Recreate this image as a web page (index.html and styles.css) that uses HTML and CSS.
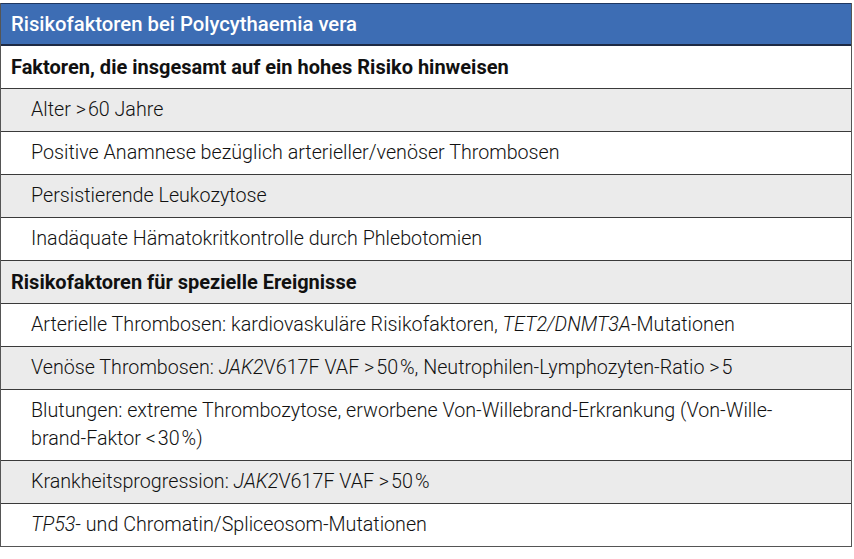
FILE: index.html
```html
<!DOCTYPE html>
<html lang="de">
<head>
<meta charset="utf-8">
<link rel="stylesheet" href="styles.css">
</head>
<body>
<div class="table">
  <div class="row head">Risikofaktoren bei Polycythaemia vera</div>
  <div class="row group">Faktoren, die insgesamt auf ein hohes Risiko hinweisen</div>
  <div class="row item alt">Alter &gt;&#8202;60 Jahre</div>
  <div class="row item">Positive Anamnese bezüglich arterieller/venöser Thrombosen</div>
  <div class="row item alt">Persistierende Leukozytose</div>
  <div class="row item">Inadäquate Hämatokritkontrolle durch Phlebotomien</div>
  <div class="row group alt">Risikofaktoren für spezielle Ereignisse</div>
  <div class="row item">Arterielle Thrombosen: kardiovaskuläre Risikofaktoren, <i>TET2/DNMT3A</i>-Mutationen</div>
  <div class="row item alt">Venöse Thrombosen: <i>JAK2</i>V617F VAF &gt;&#8202;50&#8202;%, Neutrophilen-Lymphozyten-Ratio &gt;&#8202;5</div>
  <div class="row item">Blutungen: extreme Thrombozytose, erworbene Von-Willebrand-Erkrankung (Von-Wille-<br>brand-Faktor &lt;&#8202;30&#8202;%)</div>
  <div class="row item alt">Krankheitsprogression: <i>JAK2</i>V617F VAF &gt;&#8202;50&#8202;%</div>
  <div class="row item last"><i>TP53</i>- und Chromatin/Spliceosom-Mutationen</div>
</div>
</body>
</html>
```
FILE: styles.css
```css
html, body {
  margin: 0;
  padding: 0;
  background: #ffffff;
}
body {
  padding: 3px 1px 0 0;
  font-family: Roboto, "Liberation Sans", sans-serif;
  color: #111;
}
.table {
  width: 852px;
  border-left: 1.5px solid #555;
  border-right: 1.5px solid #555;
  border-bottom: 1.5px solid #555;
  box-sizing: border-box;
}
.row {
  font-size: 20px;
  line-height: 28px;
  padding: 7px 10px;
  border-bottom: 1.5px solid #3a3a3a;
  background: #ffffff;
  white-space: nowrap;
}
.row.last {
  border-bottom: none;
}
.head {
  background: #3d6db4;
  color: #ffffff;
  font-weight: 500;
  font-size: 20.3px;
  border-top: 1.5px solid #1f3760;
  border-bottom: 2px solid #1e2a44;
  padding: 6px 10px;
}
.group {
  font-weight: 700;
}
.item {
  font-weight: 300;
  font-size: 19.7px;
  padding-left: 30px;
}
.alt {
  background: #ebebeb;
}
```
